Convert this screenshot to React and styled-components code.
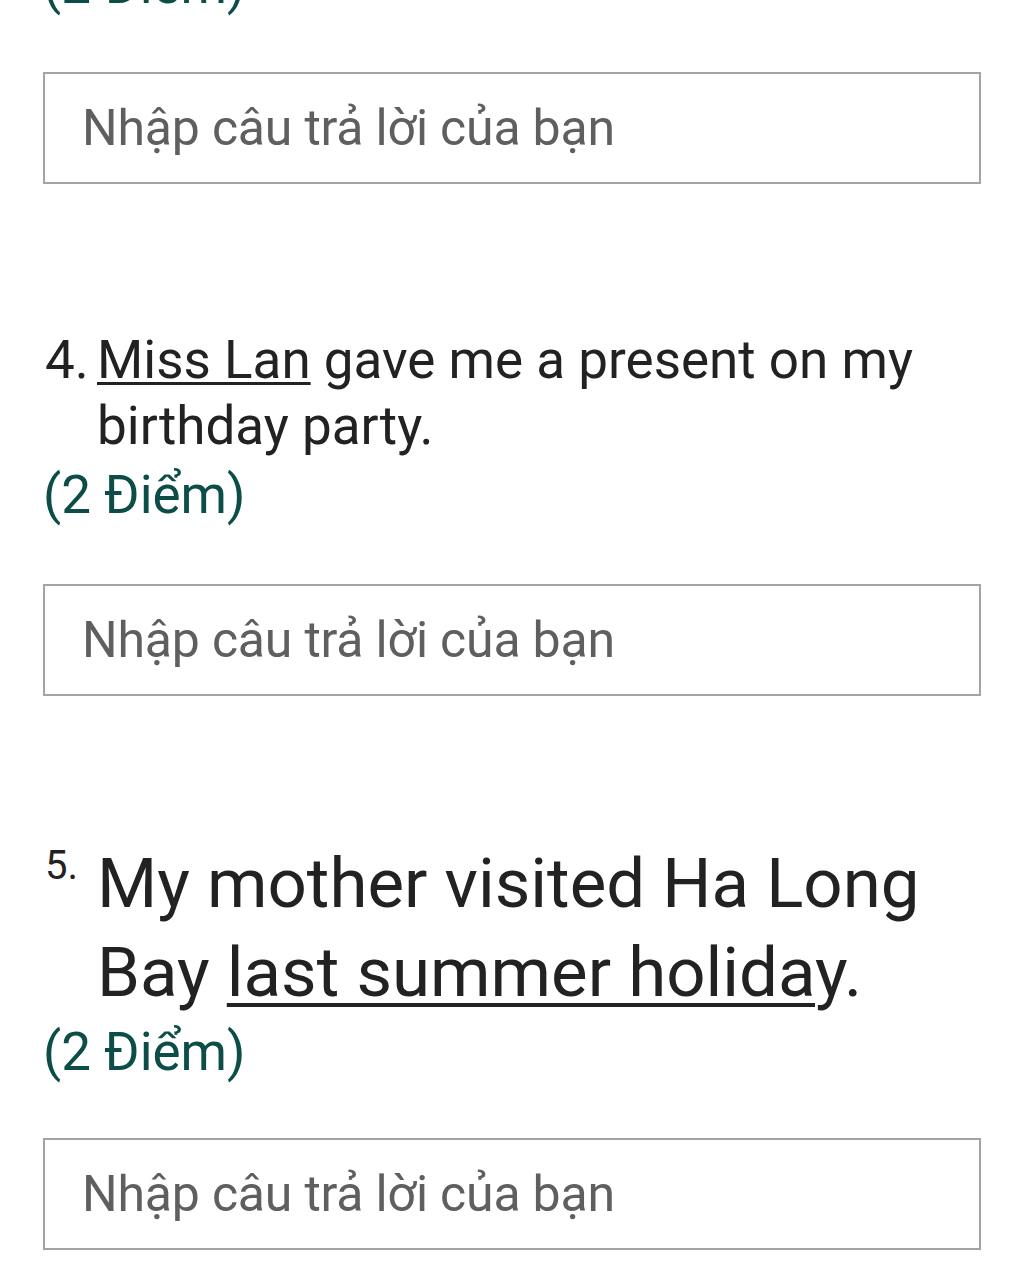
import React from "react";
import styled, { createGlobalStyle } from "styled-components";

const Global = createGlobalStyle`
  html, body { margin: 0; padding: 0; background: #ffffff; }
  body { font-family: Roboto, "Noto Sans", "Liberation Sans", sans-serif; }
`;

const Page = styled.div`
  width: 1024px;
  box-sizing: border-box;
  padding: 0 43px;
  margin-top: -47px;
  overflow: hidden;
`;

const Question = styled.section`
  display: flex;
  flex-direction: column;
  margin-top: ${(p) => p.$gap}px;
`;

const TitleRow = styled.div`
  display: flex;
  align-items: flex-start;
  color: #222222;
`;

const Num = styled.span`
  flex: 0 0 54px;
  font-size: ${(p) => p.$size}px;
  line-height: ${(p) => p.$lh}px;
  margin-left: 2px;
  margin-right: -2px;
`;

const Text = styled.div`
  flex: 1;
  font-size: ${(p) => p.$size}px;
  line-height: ${(p) => p.$lh}px;
`;

const U = styled.span`
  text-decoration: underline;
  text-decoration-thickness: ${(p) => p.$th}px;
  text-underline-offset: ${(p) => p.$off}px;
`;

const Points = styled.div`
  font-size: 53px;
  line-height: 64px;
  color: #0c4d47;
  margin-top: ${(p) => p.$gap || 0}px;
`;

const AnswerBox = styled.div`
  box-sizing: border-box;
  height: 112px;
  border: 2px solid #a3a3a3;
  padding-left: 37px;
  font-size: 50px;
  line-height: 108px;
  letter-spacing: -0.2px;
  color: #5f5f5f;
  margin-top: ${(p) => p.$gap}px;
`;

export default function App() {
  return (
    <>
      <Global />
      <Page>
        <Points>(2 Điểm)</Points>
        <AnswerBox $gap={55}>Nhập câu trả lời của bạn</AnswerBox>

        <Question $gap={143}>
          <TitleRow>
            <Num $size={53} $lh={66}>4.</Num>
            <Text $size={53} $lh={66}>
              <U $th={3} $off={4}>Miss Lan</U> gave me a present on my birthday party.
            </Text>
          </TitleRow>
          <Points $gap={4}>(2 Điểm)</Points>
          <AnswerBox $gap={57}>Nhập câu trả lời của bạn</AnswerBox>
        </Question>

        <Question $gap={143}>
          <TitleRow>
            <Num $size={40} $lh={53}>5.</Num>
            <Text $size={69} $lh={89}>
              My mother visited Ha Long Bay <U $th={4} $off={7}>last summer holida</U>y.
            </Text>
          </TitleRow>
          <Points $gap={3}>(2 Điểm)</Points>
          <AnswerBox $gap={54}>Nhập câu trả lời của bạn</AnswerBox>
        </Question>
      </Page>
    </>
  );
}
